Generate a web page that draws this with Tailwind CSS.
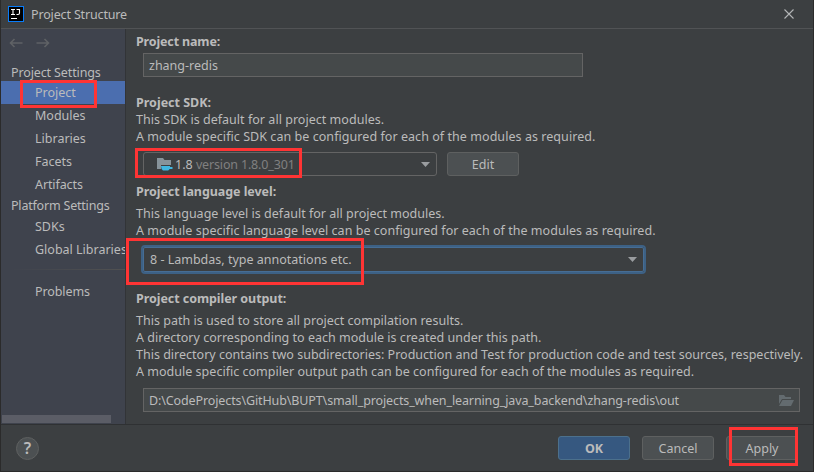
<!DOCTYPE html>
<html lang="en">
<head>
<meta charset="utf-8">
<title>Project Structure</title>
<script src="https://cdn.jsdelivr.net/npm/@tailwindcss/browser@4"></script>
</head>
<body class="overflow-hidden bg-[#3c3f41]">
<div class="relative flex h-[472px] w-[814px] flex-col overflow-hidden border-x border-b border-[#2b2b2b] bg-[#3c3f41] font-['Noto_Sans','Open_Sans',sans-serif] text-[12.5px] leading-[17px] whitespace-pre text-[#bbbbbb]">
  <header class="flex h-[29px] shrink-0 items-center border-b border-[#515355] pl-[7px] pr-[19px]">
    <svg class="mr-[7px] h-4 w-4 shrink-0" viewBox="0 0 16 16"><rect width="16" height="16" fill="#087cfa"/><rect x="1" y="1" width="14" height="14" fill="#000"/><path d="M3 3.500h4M5 3.500v5M3 8.500h4M8.500 3.500h3v3.500q0 1.500-1.500 1.500h-1.500" fill="none" stroke="#fff" stroke-width="1.100"/><path d="M3 12.500h6" stroke="#fff"/></svg>
    <span class="grow tracking-[-0.15px]">Project Structure</span>
    <svg class="h-[10px] w-[10px]" viewBox="0 0 10 10"><path d="M.5.5l9 9M9.500.5l-9 9" stroke="#b4b6b7" stroke-width="1.100"/></svg>
  </header>
  <div class="flex h-[396px] shrink-0 border-b border-[#2f3133]">
    <nav class="flex w-[125px] shrink-0 flex-col overflow-hidden border-r border-[#323437] bg-[#3f434d]">
      <div class="flex h-[34px] shrink-0 items-start gap-[13px] pl-2 pt-[9px]">
        <svg class="h-[10px] w-[14px]" viewBox="0 0 14 10"><path d="M13.500 5H1.500M5.500 1l-4 4 4 4" fill="none" stroke="#5f6265" stroke-width="1.600"/></svg>
        <svg class="h-[10px] w-[14px]" viewBox="0 0 14 10"><path d="M.5 5h12M8.500 1l4 4-4 4" fill="none" stroke="#5f6265" stroke-width="1.600"/></svg>
      </div>
      <div class="flex h-[18px] shrink-0 items-center pl-[10px] tracking-[-0.12px]"><span>Project Settings</span></div>
      <div class="flex h-[23px] shrink-0 items-center bg-[#4b6eaf] pl-[34px]"><span>Project</span></div>
      <div class="flex h-[23px] shrink-0 items-center pl-[34px]"><span>Modules</span></div>
      <div class="flex h-[23px] shrink-0 items-center pl-[34px]"><span>Libraries</span></div>
      <div class="flex h-[23px] shrink-0 items-center pl-[34px]"><span>Facets</span></div>
      <div class="flex h-[23px] shrink-0 items-center pl-[34px] tracking-[-0.1px]"><span>Artifacts</span></div>
      <div class="flex h-[19px] shrink-0 items-center pl-[10px] tracking-[-0.2px]"><span>Platform Settings</span></div>
      <div class="flex h-[23px] shrink-0 items-center pl-[34px]"><span>SDKs</span></div>
      <div class="flex h-[23px] shrink-0 items-center pl-[34px]"><span>Global Libraries</span></div>
      <div class="mt-2 ml-[9px] h-px shrink-0 bg-linear-to-r from-[#3f434d] to-[#515151]"></div>
      <div class="mt-[10px] flex h-[23px] shrink-0 items-center pl-[34px] tracking-[-0.1px]"><span>Problems</span></div>
      <div class="mt-auto mb-px ml-px h-2 w-[109px] shrink-0 bg-[#5b5d66]"></div>
    </nav>
    <main class="flex grow flex-col items-start pl-[10px] pt-[4px]">
      <h2 class="font-bold tracking-[-0.15px]">Project name:</h2>
      <div class="ml-[7px] mt-[3px] flex h-6 w-[440px] items-center border border-[#646464] bg-[#45494a] pl-[5px]"><span>zhang-redis</span></div>
      <h2 class="mt-[17px] font-bold">Project SDK:</h2>
      <p class="tracking-[0.03px]">This SDK is default for all project modules.</p>
      <p class="tracking-[0.055px]">A module specific SDK can be configured for each of the modules as required.</p>
      <div class="ml-[7px] mt-[7px] flex gap-[10px]">
        <div class="flex h-6 w-[294px] items-center rounded-[3px] border border-[#646464] pl-[13px] pr-[6px]">
          <svg class="mr-[2px] h-4 w-4" viewBox="0 0 16 16"><path d="M0 2h6l1.500 2H14v5H4v4H0z" fill="#87939a"/><path d="M4 10h9v1h2.500v2H12.500q-.5 1-1.500 1.500H6Q4 13 4 10z" fill="#40b6e0"/></svg>
          <span>1.8 </span><span class="grow tracking-[-0.16px] text-[#808080]">version 1.8.0_301</span>
          <svg class="h-[5px] w-[9px]" viewBox="0 0 9 5"><path d="M0 0h9L4.500 5z" fill="#9a9da0"/></svg>
        </div>
        <button class="flex h-6 w-[72px] items-center justify-center rounded-[3px] border border-[#5e6060] bg-[#4c5052]">Edit</button>
      </div>
      <h2 class="mt-[7px] font-bold tracking-[-0.06px]">Project language level:</h2>
      <p class="mt-[5px] tracking-[0.01px]">This language level is default for all project modules.</p>
      <p class="tracking-[0.035px]">A module specific language level can be configured for each of the modules as required.</p>
      <div class="ml-[5px] mt-[6px] flex h-[29px] w-[505px] items-center rounded-[4px] border-2 border-[#3d6185]">
        <div class="flex h-[25px] w-full items-center rounded-[2px] border border-[#466d94] pl-[6px] pr-[6px]"><span class="grow">8 - Lambdas, type annotations etc.</span>
          <svg class="h-[5px] w-[9px]" viewBox="0 0 9 5"><path d="M0 0h9L4.500 5z" fill="#9a9da0"/></svg>
        </div>
      </div>
      <h2 class="mt-[16px] font-bold tracking-[-0.06px]">Project compiler output:</h2>
      <p class="mt-[5px] tracking-[0.015px]">This path is used to store all project compilation results.</p>
      <p class="tracking-[0.015px]">A directory corresponding to each module is created under this path.</p>
      <p class="tracking-[0.005px]">This directory contains two subdirectories: Production and Test for production code and test sources, respectively.</p>
      <p class="tracking-[0.02px]">A module specific compiler output path can be configured for each of the modules as required.</p>
      <div class="ml-[7px] mt-[8px] flex h-6 w-[657px] shrink-0 items-center border border-[#646464] bg-[#45494a] pl-[5px] pr-[5px]"><span class="grow tracking-[-0.115px]">D:\CodeProjects\GitHub\BUPT\small_projects_when_learning_java_backend\zhang-redis\out</span>
        <svg class="h-[11px] w-[15px] shrink-0" viewBox="0 0 15 11"><path d="M0 0h5l1.500 2H12v2H3L0 9z" fill="#636b6f"/><path d="M3.500 5H15l-3 6H0z" fill="#636b6f"/></svg>
      </div>
    </main>
  </div>
  <footer class="flex grow items-center gap-3 pl-[15px] pr-[15px]">
    <div class="mr-auto flex h-[23px] w-[23px] items-center justify-center rounded-full border border-[#5e6060] bg-[#4c5052] text-[16px] font-semibold">?</div>
    <button class="flex h-6 w-[72px] items-center justify-center rounded-[3px] border border-[#4c708c] bg-[#365880] font-bold">OK</button>
    <button class="flex h-6 w-[72px] items-center justify-center rounded-[3px] border border-[#5e6060] bg-[#4c5052]">Cancel</button>
    <button class="flex h-6 w-[72px] items-center justify-center rounded-[3px] border border-[#5e6060] bg-[#4c5052]">Apply</button>
  </footer>
  <div class="absolute top-[80px] left-[19px] h-[28px] w-[77px] border-3 border-[#ff3434]"></div>
  <div class="absolute top-[148px] left-[134px] h-[30px] w-[167px] border-3 border-[#ff3434]"></div>
  <div class="absolute top-[238px] left-[125px] h-[47px] w-[238px] border-3 border-[#ff3434]"></div>
  <div class="absolute top-[427px] left-[728px] h-[39px] w-[69px] border-3 border-[#ff3434]"></div>
</div>
</body>
</html>
